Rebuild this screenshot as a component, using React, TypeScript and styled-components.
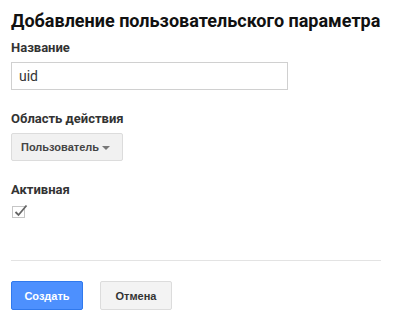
import React from "react";
import styled, { createGlobalStyle } from "styled-components";

const Global = createGlobalStyle`
  html, body { margin: 0; padding: 0; background: #fff; }
  body { font-family: Roboto, "Liberation Sans", Arial, sans-serif; color: #222; }
  * { box-sizing: border-box; }
`;

const Page = styled.div`
  display: flex;
  flex-direction: column;
  align-items: flex-start;
  padding: 10px 0 0 11px;
  width: 381px;
`;

const Title = styled.h1`
  margin: 0;
  font-size: 18px;
  line-height: 22px;
  font-weight: 700;
  color: #111;
  white-space: nowrap;
`;

const Label = styled.div<{ $top: number }>`
  margin-top: ${(p) => p.$top}px;
  font-size: 13px;
  line-height: 16px;
  font-weight: 700;
  color: #333;
`;

const TextInput = styled.input`
  margin-top: 6px;
  width: 277px;
  height: 28px;
  border: 1px solid #d0d0d0;
  padding: 0 7px;
  font-family: Roboto, "Liberation Sans", Arial, sans-serif;
  font-size: 14px;
  color: #333;
  outline: none;
`;

const Select = styled.div`
  margin-top: 6px;
  width: 112px;
  height: 28px;
  display: flex;
  align-items: center;
  justify-content: space-between;
  padding: 0 12px 0 9px;
  background: #f1f1f1;
  border: 1px solid #dcdcdc;
  border-radius: 2px;
  font-family: "Liberation Sans", Arial, sans-serif;
  font-size: 11px;
  font-weight: 700;
  color: #444;
`;

const Arrow = styled.span`
  width: 0;
  height: 0;
  border-left: 4px solid transparent;
  border-right: 4px solid transparent;
  border-top: 4px solid #777;
  margin-top: 2px;
`;

const CheckBox = styled.div`
  margin-top: 8px;
  margin-left: 1px;
  width: 13px;
  height: 12px;
  border: 1px solid #c6c6c6;
  background: #fff;
  position: relative;
`;

const CheckMark = styled.svg`
  position: absolute;
  left: 1px;
  top: -3px;
`;

const Divider = styled.hr`
  margin: 42px 0 0 0;
  width: 370px;
  border: none;
  border-top: 1px solid #e3e3e3;
  height: 0;
`;

const Actions = styled.div`
  margin-top: 20px;
  display: flex;
  gap: 17px;
`;

const Button = styled.button<{ $primary?: boolean }>`
  width: 72px;
  height: 29px;
  border-radius: 2px;
  font-family: "Liberation Sans", Arial, sans-serif;
  font-size: 11px;
  font-weight: 700;
  padding: 0;
  cursor: pointer;
  border: 1px solid ${(p) => (p.$primary ? "#3079ed" : "#dcdcdc")};
  background: ${(p) => (p.$primary ? "#4d90fe" : "#f3f3f3")};
  color: ${(p) => (p.$primary ? "#fff" : "#333")};
`;

export default function App() {
  return (
    <>
      <Global />
      <Page>
        <Title>Добавление пользовательского параметра</Title>
        <Label $top={8}>Название</Label>
        <TextInput defaultValue="uid" />
        <Label $top={21}>Область действия</Label>
        <Select>
          <span>Пользователь</span>
          <Arrow />
        </Select>
        <Label $top={21}>Активная</Label>
        <CheckBox>
          <CheckMark width="14" height="13" viewBox="0 0 14 13">
            <path d="M1.5 8 L4.5 11 L12.5 1.5" fill="none" stroke="#666" strokeWidth="1.8" />
          </CheckMark>
        </CheckBox>
        <Divider />
        <Actions>
          <Button $primary>Создать</Button>
          <Button>Отмена</Button>
        </Actions>
      </Page>
    </>
  );
}
